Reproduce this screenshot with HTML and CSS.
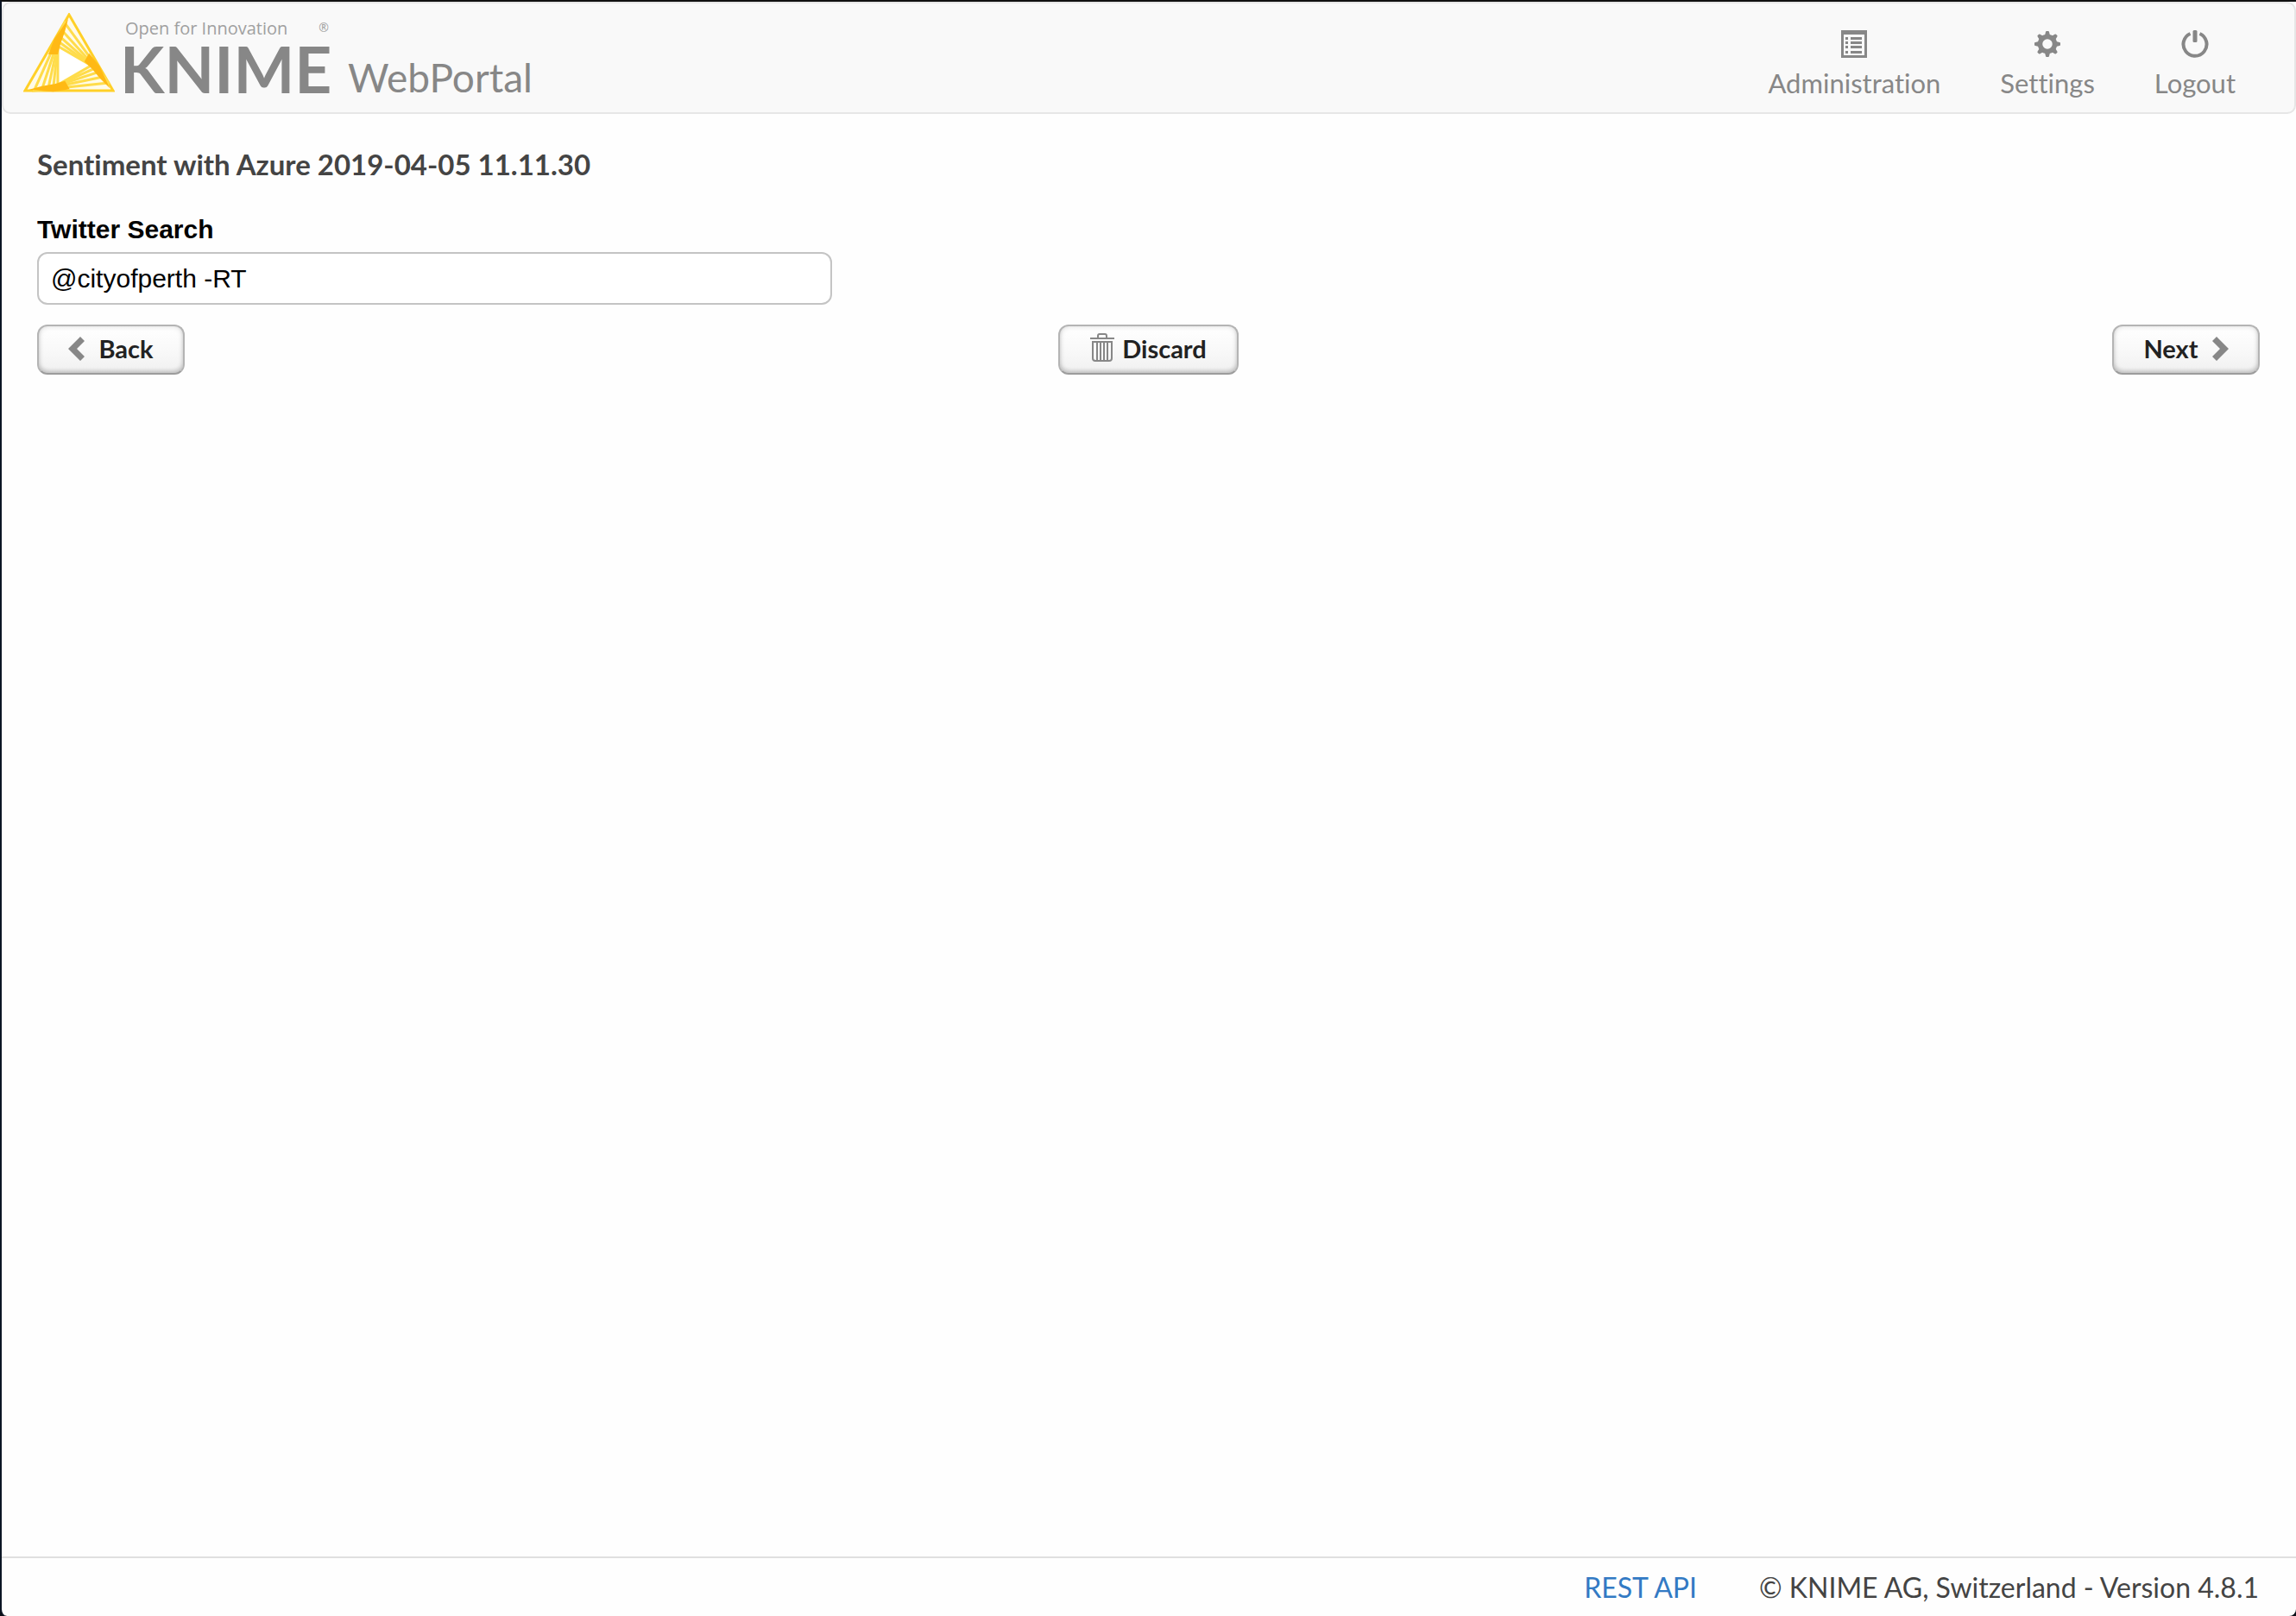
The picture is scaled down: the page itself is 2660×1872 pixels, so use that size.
FILE: index.html
```
<!doctype html>
<html lang="en">

<head>
    <meta charset="utf-8" />
    <meta name="viewport" content="width=device-width, initial-scale=1.0" />
    <title>KNIME WebPortal</title>
    <link rel="stylesheet" href="styles.css">
</head>

<body>
    <div class="page">
        <header class="header">
            <div class="brand">
                <svg class="brand-logo" viewBox="0 0 106 92" aria-hidden="true">
                    <defs>
                        <polygon id="tri" points="53,2 104,90 2,90" vector-effect="non-scaling-stroke" />
                    </defs>
                    <g fill="#fffbe8" stroke="#ffdc4a" stroke-width="3">
                        <use href="#tri" stroke="#ffd028" />
                        <use href="#tri" transform="translate(53 61) rotate(-6) scale(.85) translate(-53 -61)" />
                        <use href="#tri" transform="translate(53 61) rotate(-12) scale(.72) translate(-53 -61)" />
                        <use href="#tri" transform="translate(53 61) rotate(-18) scale(.61) translate(-53 -61)" />
                        <use href="#tri" transform="translate(53 61) rotate(-24) scale(.52) translate(-53 -61)" />
                        <use href="#tri" transform="translate(53 61) rotate(-30) scale(.44) translate(-53 -61)" fill="#fff" />
                    </g>
                    <g fill="#ffb915">
                        <polygon id="band" points="52,7 48,22 43,36 40,48 29,48 36,30" />
                        <use href="#band" transform="rotate(120 53 61)" />
                        <use href="#band" transform="rotate(240 53 61)" />
                    </g>
                </svg>
                <div class="brand-text">
                    <div class="brand-tagline"><span>Open for Innovation</span><span class="brand-mark">®</span></div>
                    <div class="brand-name">KNIME</div>
                </div>
                <div class="brand-product">WebPortal</div>
            </div>
            <nav class="nav">
                <a class="nav-item" href="#">
                    <svg class="nav-icon" viewBox="0 0 32 32" aria-hidden="true">
                        <path fill-rule="evenodd" d="M1 0H31V32H1ZM4 5V29H28V5Z" />
                        <path d="M6 8h3v3H6zM6 13h3v3H6zM6 18h3v3H6zM6 24h3v3H6zM12 8h13v3H12zM12 13h13v3H12zM12 18h13v3H12zM12 24h13v3H12z" />
                    </svg>
                    <span>Administration</span>
                </a>
                <a class="nav-item" href="#">
                    <svg class="nav-icon" viewBox="0 0 32 32" aria-hidden="true">
                        <g id="teeth">
                            <path id="tooth" d="M12.500 8 14 2Q14.200 1 15 1H17Q17.800 1 18 2L19.500 8Z" />
                            <use href="#tooth" transform="rotate(45 16 16)" />
                            <use href="#tooth" transform="rotate(90 16 16)" />
                            <use href="#tooth" transform="rotate(135 16 16)" />
                        </g>
                        <use href="#teeth" transform="rotate(180 16 16)" />
                        <circle cx="16" cy="16" r="8.500" fill="none" stroke="#878787" stroke-width="5.500" />
                    </svg>
                    <span>Settings</span>
                </a>
                <a class="nav-item" href="#">
                    <svg class="nav-icon" viewBox="0 0 32 32" aria-hidden="true">
                        <path d="M10.500 4A13.500 13.500 0 1 0 21.500 4" fill="none" stroke="#878787" stroke-width="4" />
                        <rect x="13.500" y="0" width="5" height="14" rx="1.500" />
                    </svg>
                    <span>Logout</span>
                </a>
            </nav>
        </header>

        <main class="content">
            <h1 class="title">Sentiment with Azure 2019-04-05 11.11.30</h1>
            <form class="form">
                <label class="field-label" for="search">Twitter Search</label>
                <input class="field-input" id="search" type="text" value="@cityofperth -RT">
                <div class="actions">
                    <button class="btn" type="button">
                        <svg class="btn-arrow" viewBox="0 0 20 28" aria-hidden="true">
                            <path d="M14 0 19 5 10 14 19 23 14 28 0 14Z" />
                        </svg>
                        Back
                    </button>
                    <button class="btn btn-discard" type="button">
                        <svg class="btn-trash" viewBox="0 0 28 34" fill="none" stroke="#878787" stroke-width="2" aria-hidden="true">
                            <path d="M0 7H28M9 7V4Q9 2 11 2H17Q19 2 19 4V7M3 11H25V30Q25 33 22 33H6Q3 33 3 30ZM8 11V33M12 11V33M16 11V33M20 11V33" />
                        </svg>
                        Discard
                    </button>
                    <button class="btn" type="button">
                        Next
                        <svg class="btn-arrow" viewBox="0 0 20 28" aria-hidden="true">
                            <path d="M6 0 1 5 10 14 1 23 6 28 20 14Z" />
                        </svg>
                    </button>
                </div>
            </form>
        </main>

        <footer class="footer">
            <a class="footer-link" href="#">REST API</a>
            <span>© KNIME AG, Switzerland - Version 4.8.1</span>
        </footer>
    </div>
</body>

</html>
```
FILE: styles.css
```
* {
    box-sizing: border-box;
}

body {
    margin: 0;
    background: #0b1018;
    font-family: Lato, "Liberation Sans", sans-serif;
    font-variant-ligatures: none;
    color: #444;
}

/* Window frame */
.page {
    display: flex;
    flex-direction: column;
    min-height: 100vh;
    border-top: 2px solid #111;
    border-left: 2px solid #0b1524;
    border-radius: 0 0 8px 8px;
    background: #fefefe;
}

/* Header */
.header {
    display: flex;
    justify-content: space-between;
    height: 130px;
    padding: 11px 68px 0 23px;
    border: 2px solid #e6e6e6;
    border-radius: 10px;
    background: #f9f9f9;
    color: #878787;
}

.brand {
    display: flex;
    align-items: flex-start;
}

.brand-logo {
    width: 106px;
    height: 92px;
    margin-right: 12px;
}

.brand-text {
    width: 236px;
    margin-right: 22px;
}

.brand-tagline {
    display: flex;
    justify-content: space-between;
    padding-top: 4px;
    font-family: "Open Sans", sans-serif;
    font-size: 20px;
    line-height: 28px;
    color: #a0a0a0;
}

.brand-mark {
    font-size: 14px;
    line-height: 26px;
}

.brand-name {
    margin-left: -6px;
    font-size: 75px;
    font-weight: 700;
    line-height: 64px;
}

.brand-product {
    padding-top: 45px;
    font-size: 46px;
    line-height: 60px;
}

.nav {
    display: flex;
    gap: 69px;
    padding-top: 20px;
}

.nav-item {
    display: flex;
    flex-direction: column;
    align-items: center;
    gap: 11px;
    font-size: 31px;
    line-height: 36px;
    color: #878787;
    text-decoration: none;
}

.nav-icon {
    width: 32px;
    height: 32px;
    fill: #878787;
}

/* Content */
.content {
    flex: 1;
    padding: 38px 42px 0 41px;
}

.title {
    margin: 0 0 36px;
    font-size: 33px;
    font-weight: 700;
    line-height: 40px;
}

.field-label {
    display: block;
    margin-bottom: 6px;
    font-family: "Liberation Sans", sans-serif;
    font-size: 30px;
    font-weight: 700;
    line-height: 40px;
    color: #000;
}

.field-input {
    display: block;
    width: 100%;
    max-width: 921px;
    height: 61px;
    padding: 0 14px;
    border: 2px solid #c4c4c4;
    border-radius: 12px;
    background: #fff;
    font-family: "Liberation Sans", sans-serif;
    font-size: 30px;
    color: #000;
}

.actions {
    display: flex;
    justify-content: space-between;
    margin-top: 23px;
}

.btn {
    display: flex;
    align-items: center;
    justify-content: center;
    gap: 15px;
    width: 171px;
    height: 58px;
    padding: 0 0 2px;
    border: 2px solid #b4b4b4;
    border-bottom-color: #9c9c9c;
    border-radius: 12px;
    background: linear-gradient(#fff, #f9f9f9 50%, #f0f0f0);
    box-shadow: inset 0 0 6px rgba(0, 0, 0, 0.15), inset 0 -3px 4px rgba(0, 0, 0, 0.12);
    font-family: inherit;
    font-size: 29px;
    font-weight: 700;
    line-height: 36px;
    color: #222;
}

.btn-discard {
    gap: 9px;
    width: 209px;
}

.btn-arrow {
    width: 20px;
    height: 28px;
    fill: #878787;
}

.btn-trash {
    width: 28px;
    height: 34px;
    margin-bottom: 4px;
}

/* Footer */
.footer {
    display: flex;
    justify-content: flex-end;
    gap: 72px;
    height: 69px;
    padding: 14px 43px 0 0;
    border-top: 2px solid #e0e0e0;
    font-size: 32px;
    line-height: 40px;
}

.footer-link {
    color: #337ac4;
    text-decoration: none;
}
```
